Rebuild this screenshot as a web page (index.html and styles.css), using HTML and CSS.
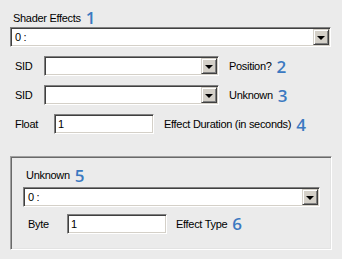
FILE: index.html
```html
<!DOCTYPE html>
<html lang="en">
<head>
    <meta charset="UTF-8">
    <title>Shader Effects</title>
    <link rel="stylesheet" href="styles.css">
</head>
<body>
    <div class="page">
        <div class="heading">
            <span>Shader Effects</span>
            <span class="num">1</span>
        </div>
        <div class="combo combo-wide">
            <span class="combo-text">0 :</span>
            <span class="drop"><span class="arrow"></span></span>
        </div>

        <div class="row">
            <span class="label label-sid">SID</span>
            <div class="combo combo-sid">
                <span class="combo-text"></span>
                <span class="drop"><span class="arrow"></span></span>
            </div>
            <span class="after">Position?</span>
            <span class="num">2</span>
        </div>

        <div class="row">
            <span class="label label-sid">SID</span>
            <div class="combo combo-sid">
                <span class="combo-text"></span>
                <span class="drop"><span class="arrow"></span></span>
            </div>
            <span class="after">Unknown</span>
            <span class="num">3</span>
        </div>

        <div class="row">
            <span class="label label-float">Float</span>
            <div class="field">1</div>
            <span class="after">Effect Duration (in seconds)</span>
            <span class="num">4</span>
        </div>

        <div class="group">
            <div class="heading group-heading">
                <span>Unknown</span>
                <span class="num">5</span>
            </div>
            <div class="combo combo-group">
                <span class="combo-text">0 :</span>
                <span class="drop"><span class="arrow"></span></span>
            </div>
            <div class="row row-byte">
                <span class="label label-byte">Byte</span>
                <div class="field">1</div>
                <span class="after">Effect Type</span>
                <span class="num">6</span>
            </div>
        </div>
    </div>
</body>
</html>
```

FILE: styles.css
```css
body {
    margin: 0;
    background: #ebebeb;
    font-family: "Liberation Sans", Arial, sans-serif;
    font-size: 11px;
    letter-spacing: -0.3px;
    color: #000;
}

.page {
    padding: 8px 0 0 10px;
}

/* label + blue step number */
.heading {
    display: flex;
    align-items: center;
    gap: 5px;
    height: 19px;
    padding-left: 3px;
}

.num {
    color: #3b79c1;
    font-family: "Open Sans", "Liberation Sans", sans-serif;
    font-size: 17px;
    font-weight: 600;
    line-height: 17px;
    letter-spacing: 0;
}

/* sunken combo box */
.combo {
    display: flex;
    align-items: center;
    height: 20px;
    box-sizing: border-box;
    background: #fff;
    border: 1px solid;
    border-color: #808080 #fff #fff #808080;
    box-shadow: inset 1px 1px 0 #404040, inset -1px -1px 0 #d4d0c8;
    padding: 1px;
}

.combo-text {
    flex: 1;
    padding-left: 3px;
}

.drop {
    width: 16px;
    height: 16px;
    box-sizing: border-box;
    background: #d4d0c8;
    border: 1px solid;
    border-color: #d4d0c8 #404040 #404040 #d4d0c8;
    box-shadow: inset 1px 1px 0 #fff, inset -1px -1px 0 #808080;
    display: flex;
    align-items: center;
    justify-content: center;
}

.arrow {
    width: 0;
    height: 0;
    border-left: 4px solid transparent;
    border-right: 4px solid transparent;
    border-top: 4px solid #000;
    margin-top: 1px;
}

.combo-wide {
    width: 321px;
}

.row {
    display: flex;
    align-items: center;
    height: 20px;
    margin-top: 9px;
    padding-left: 5px;
}

.label-sid { width: 29px; }
.label-float { width: 39px; }

.combo-sid { width: 175px; }

.after {
    margin-left: 10px;
    margin-right: 5px;
}

/* sunken text box */
.field {
    width: 100px;
    height: 20px;
    box-sizing: border-box;
    background: #fff;
    border: 1px solid;
    border-color: #808080 #fff #fff #808080;
    box-shadow: inset 1px 1px 0 #404040, inset -1px -1px 0 #d4d0c8;
    padding: 2px 0 0 3px;
    line-height: 15px;
}

/* panel with 3d border */
.group {
    width: 322px;
    height: 94px;
    box-sizing: border-box;
    margin-top: 22px;
    border: 1px solid;
    border-color: #a0a0a0 #fff #fff #a0a0a0;
    box-shadow: inset 1px 1px 0 #696969, inset -1px -1px 0 #e3e3e3;
    padding: 8px 0 0 12px;
}

.group-heading {
    padding-left: 3px;
    height: 20px;
}

.combo-group {
    width: 297px;
    margin-top: 2px;
}

.row-byte {
    margin-top: 7px;
    padding-left: 5px;
    height: 19px;
}

.label-byte { width: 39px; }

.row-byte .after { margin-left: 9px; }
```
